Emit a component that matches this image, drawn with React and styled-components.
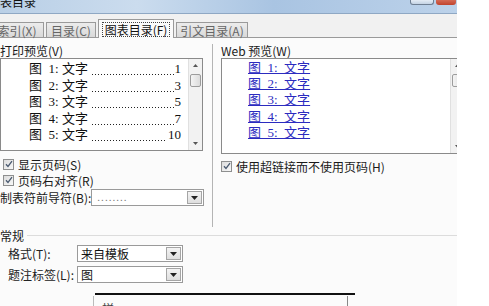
import React from 'react';
import styled, { createGlobalStyle } from 'styled-components';

const GlobalStyle = createGlobalStyle`
  html, body {
    margin: 0;
    padding: 0;
    background: #ffffff;
  }
  body {
    font-family: "Noto Sans CJK SC", "Liberation Sans", sans-serif;
    font-size: 12px;
    color: #1a1a1a;
  }
`;

const printEntries = [
  { num: 1, page: 1 },
  { num: 2, page: 3 },
  { num: 3, page: 5 },
  { num: 4, page: 7 },
  { num: 5, page: 10 },
];

const tabs = [
  { label: '索引(X)', width: 52, offset: -10 },
  { label: '目录(C)', width: 48 },
  { label: '图表目录(F)', width: 74, active: true },
  { label: '引文目录(A)', width: 70 },
];

function DropArrow() {
  return (
    <svg width="7" height="4" viewBox="0 0 7 4">
      <path d="M0 0h7L3.5 4z" fill="#222" />
    </svg>
  );
}

function ScrollBar({ height }) {
  return (
    <Scroll style={{ height }}>
      <ScrollArrow>
        <svg width="5" height="3" viewBox="0 0 5 3">
          <path d="M0 3h5L2.5 0z" fill="#555" />
        </svg>
      </ScrollArrow>
      <Thumb />
      <ScrollTrack />
      <ScrollArrow>
        <svg width="5" height="3" viewBox="0 0 5 3">
          <path d="M0 0h5L2.5 3z" fill="#555" />
        </svg>
      </ScrollArrow>
    </Scroll>
  );
}

function Check({ label }) {
  return (
    <CheckRow>
      <Box>
        <svg width="8" height="8" viewBox="0 0 8 8">
          <path d="M1 4.2l2 2.2L7 1.2" fill="none" stroke="#4a5a70" strokeWidth="1.3" />
        </svg>
      </Box>
      <span>{label}</span>
    </CheckRow>
  );
}

function Select({ value, width, leader }) {
  return (
    <SelectBox $width={width}>
      <SelectValue $leader={leader}>{value}</SelectValue>
      <SelectButton>
        <DropArrow />
      </SelectButton>
    </SelectBox>
  );
}

export default function App() {
  return (
    <>
      <GlobalStyle />
      <Page>
        <Window>
          <TitleBar>
            <Title>图表目录</Title>
            <WinButtons>
              <WinButton />
              <CloseButton />
            </WinButtons>
          </TitleBar>
          <TabStrip>
            {tabs.map((t) => (
              <Tab key={t.label} $active={t.active} $width={t.width} $offset={t.offset}>
                <TabText $active={t.active}>{t.label}</TabText>
              </Tab>
            ))}
          </TabStrip>
          <Body>
            <Columns>
              <LeftCol>
                <Label>打印预览(V)</Label>
                <ListBox $height={93} $width={203}>
                  <ListInner>
                    {printEntries.map((e) => (
                      <PrintRow key={e.num}>
                        <span>图&nbsp;&nbsp;{e.num}:&nbsp;文字</span>
                        <Leader />
                        <PageNum>{e.page}</PageNum>
                      </PrintRow>
                    ))}
                  </ListInner>
                  <ScrollBar height={91} />
                </ListBox>
                <Checks>
                  <Check label="显示页码(S)" />
                  <Check label="页码右对齐(R)" />
                </Checks>
                <LeaderRow>
                  <span>制表符前导符(B):</span>
                  <Select value="........" width={113} leader />
                </LeaderRow>
              </LeftCol>
              <Separator />
              <RightCol>
                <Label>Web 预览(W)</Label>
                <ListBox $height={96} $width={244}>
                  <WebInner>
                    {printEntries.map((e) => (
                      <WebLink key={e.num}>{`图  ${e.num}:  文字`}</WebLink>
                    ))}
                  </WebInner>
                  <ScrollBar height={94} />
                </ListBox>
                <RightCheck>
                  <Check label="使用超链接而不使用页码(H)" />
                </RightCheck>
              </RightCol>
            </Columns>
            <GroupHeader>
              <span>常规</span>
              <GroupLine />
            </GroupHeader>
            <FormRow>
              <FormLabel>格式(T):</FormLabel>
              <Select value="来自模板" width={106} />
            </FormRow>
            <FormRow $gap={4}>
              <FormLabel>题注标签(L):</FormLabel>
              <Select value="图" width={106} />
            </FormRow>
            <Fragment>
              <FragmentLine />
              <FragmentBox>
                <FragmentText>样</FragmentText>
              </FragmentBox>
            </Fragment>
          </Body>
        </Window>
      </Page>
    </>
  );
}

const Page = styled.div`
  width: 489px;
  height: 306px;
  overflow: hidden;
  background: #ffffff;
`;

const Window = styled.div`
  width: 457px;
  height: 306px;
  display: flex;
  flex-direction: column;
  overflow: hidden;
  background: #fbfbfb;
`;

const TitleBar = styled.div`
  height: 13px;
  flex: none;
  display: flex;
  align-items: flex-start;
  background: linear-gradient(90deg, #b9cfe6 0%, #cbdcee 30%, #a9c4e2 60%, #bcd2ea 100%);
  border-bottom: 1px solid #8fa8c4;
  overflow: hidden;
`;

const Title = styled.span`
  font-size: 12px;
  line-height: 12px;
  margin-top: -4px;
  margin-left: -12px;
  color: #111;
  white-space: nowrap;
`;

const WinButtons = styled.div`
  margin-left: auto;
  display: flex;
  gap: 2px;
  margin-right: 1px;
`;

const WinButton = styled.div`
  width: 22px;
  height: 4px;
  border: 1px solid #6f7f93;
  border-top: none;
  border-radius: 0 0 3px 3px;
  background: linear-gradient(#e4ecf5, #c4d3e4);
`;

const CloseButton = styled.div`
  width: 20px;
  height: 5px;
  border-radius: 0 0 3px 3px;
  background: linear-gradient(#d46a55, #c0432d);
`;

const TabStrip = styled.div`
  height: 23px;
  flex: none;
  display: flex;
  align-items: flex-end;
  gap: 2px;
  background: #f1f1f1;
  border-bottom: 1px solid #9a9a9a;
`;

const Tab = styled.div`
  width: ${(p) => p.$width}px;
  flex: none;
  height: ${(p) => (p.$active ? 18 : 14)}px;
  margin-left: ${(p) => p.$offset || 0}px;
  margin-bottom: ${(p) => (p.$active ? -1 : 0)}px;
  display: flex;
  align-items: center;
  justify-content: center;
  border: 1px solid #9a9a9a;
  border-bottom: none;
  background: ${(p) => (p.$active ? '#fbfbfb' : 'linear-gradient(#ececec, #d9d9d9)')};
  position: relative;
  z-index: ${(p) => (p.$active ? 1 : 0)};
`;

const TabText = styled.span`
  font-size: 12px;
  line-height: 13px;
  white-space: nowrap;
  color: ${(p) => (p.$active ? '#111' : '#666')};
  border: ${(p) => (p.$active ? '1px dotted #444' : '1px solid transparent')};
  padding: 0 2px;
`;

const Body = styled.div`
  display: flex;
  flex-direction: column;
  padding-top: 6px;
`;

const Columns = styled.div`
  display: flex;
  height: 183px;
`;

const LeftCol = styled.div`
  width: 203px;
  flex: none;
  display: flex;
  flex-direction: column;
`;

const RightCol = styled.div`
  flex: none;
  width: 244px;
  margin-left: 8px;
  display: flex;
  flex-direction: column;
`;

const Separator = styled.div`
  width: 1px;
  flex: none;
  margin-left: 9px;
  background: #b4b4b4;
  height: 183px;
`;

const Label = styled.div`
  height: 14px;
  line-height: 14px;
  font-size: 12px;
  white-space: nowrap;
`;

const ListBox = styled.div`
  width: ${(p) => p.$width}px;
  height: ${(p) => p.$height}px;
  box-sizing: border-box;
  border: 1px solid #8a8a8a;
  background: #ffffff;
  display: flex;
`;

const ListInner = styled.div`
  flex: 1;
  min-width: 0;
  padding: 2px 7px 0 28px;
  display: flex;
  flex-direction: column;
`;

const PrintRow = styled.div`
  display: flex;
  align-items: baseline;
  height: 16.5px;
  line-height: 16.5px;
  font-family: "Liberation Serif", "Noto Sans CJK SC", serif;
  font-size: 13px;
  color: #111;
  white-space: nowrap;
`;

const Leader = styled.span`
  flex: 1;
  align-self: stretch;
  margin: 0 1px 0 3px;
  background-image: radial-gradient(circle, #222 0.6px, transparent 1px);
  background-size: 3px 3px;
  background-repeat: repeat-x;
  background-position: left 12px;
`;

const PageNum = styled.span`
  flex: none;
`;

const WebInner = styled.div`
  flex: 1;
  padding: 1px 0 0 26px;
  display: flex;
  flex-direction: column;
  align-items: flex-start;
`;

const WebLink = styled.span`
  height: 16.2px;
  line-height: 16.2px;
  font-family: "Liberation Serif", "Noto Sans CJK SC", serif;
  font-size: 13px;
  color: #2b2bbf;
  text-decoration: underline;
  white-space: pre;
`;

const Scroll = styled.div`
  width: 13px;
  flex: none;
  display: flex;
  flex-direction: column;
  background: #f2f2f2;
  border-left: 1px solid #e0e0e0;
`;

const ScrollArrow = styled.div`
  height: 13px;
  display: flex;
  align-items: center;
  justify-content: center;
`;

const Thumb = styled.div`
  height: 11px;
  margin: 2px 1px 0;
  border: 1px solid #9c9c9c;
  border-radius: 2px;
  background: linear-gradient(90deg, #f4f4f4, #dcdcdc);
`;

const ScrollTrack = styled.div`
  flex: 1;
`;

const Checks = styled.div`
  margin-top: 5px;
  display: flex;
  flex-direction: column;
`;

const CheckRow = styled.div`
  height: 16px;
  display: flex;
  align-items: center;
  gap: 4px;
  padding-left: 3px;
  font-size: 12px;
  white-space: nowrap;
`;

const Box = styled.div`
  width: 9px;
  height: 9px;
  border: 1px solid #8e8f8f;
  background: linear-gradient(135deg, #dcdcdc, #f8f8f8);
  display: flex;
  align-items: center;
  justify-content: center;
`;

const RightCheck = styled.div`
  margin-top: 4px;
  margin-left: -3px;
`;

const LeaderRow = styled.div`
  height: 19px;
  display: flex;
  align-items: center;
  justify-content: space-between;
  font-size: 12px;
  white-space: nowrap;
`;

const SelectBox = styled.div`
  width: ${(p) => p.$width}px;
  flex: none;
  height: 17px;
  box-sizing: border-box;
  border: 1px solid #9a9a9a;
  background: #ffffff;
  display: flex;
  align-items: stretch;
`;

const SelectValue = styled.div`
  flex: 1;
  padding-left: ${(p) => (p.$leader ? 5 : 3)}px;
  font-size: ${(p) => (p.$leader ? 10 : 12)}px;
  line-height: ${(p) => (p.$leader ? 13 : 15)}px;
  color: ${(p) => (p.$leader ? '#777' : '#111')};
  letter-spacing: ${(p) => (p.$leader ? 1 : 0)}px;
  white-space: nowrap;
`;

const SelectButton = styled.div`
  width: 13px;
  margin: 1px;
  border: 1px solid #a5a5a5;
  background: linear-gradient(#f4f4f4, #dedede);
  display: flex;
  align-items: center;
  justify-content: center;
`;

const GroupHeader = styled.div`
  margin-top: 1px;
  height: 14px;
  display: flex;
  align-items: center;
  gap: 3px;
  font-size: 12px;
`;

const GroupLine = styled.div`
  width: 430px;
  height: 1px;
  background: #dcdcdc;
`;

const FormRow = styled.div`
  margin-top: ${(p) => p.$gap || 3}px;
  display: flex;
  align-items: center;
  padding-left: 8px;
  height: 17px;
`;

const FormLabel = styled.span`
  width: 69px;
  font-size: 12px;
  color: #222;
  white-space: nowrap;
`;

const Fragment = styled.div`
  margin-top: 10px;
  margin-left: 93px;
  width: 262px;
`;

const FragmentLine = styled.div`
  height: 2px;
  background: #111;
  margin-left: 2px;
`;

const FragmentBox = styled.div`
  margin-top: 1px;
  width: 253px;
  height: 12px;
  border-left: 1px solid #bbb;
  border-right: 1px solid #888;
  overflow: hidden;
`;

const FragmentText = styled.div`
  font-size: 12px;
  line-height: 12px;
  padding: 7px 0 0 8px;
  color: #444;
`;
